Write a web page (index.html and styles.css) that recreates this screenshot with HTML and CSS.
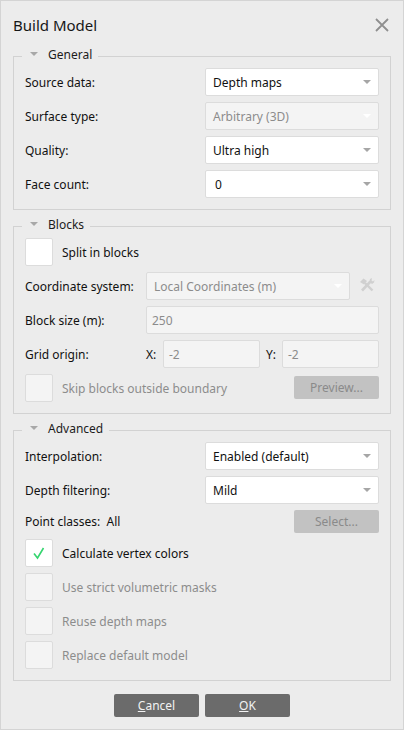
FILE: index.html
```html
<!DOCTYPE html>
<html lang="en">
<head>
<meta charset="utf-8">
<title>Build Model</title>
<link rel="stylesheet" href="styles.css">
</head>
<body>
<div class="dialog">
  <header class="titlebar">
    <h1 class="title">Build Model</h1>
    <svg class="close" width="14" height="14" viewBox="0 0 14 14"><path d="M1 1L13 13M13 1L1 13" stroke="#8f8f8f" stroke-width="1.8" fill="none"/></svg>
  </header>

  <section class="group">
    <div class="legend"><span class="tri"></span><span>General</span></div>
    <div class="row"><span class="label">Source data:</span><div class="combo wide"><span>Depth maps</span><i class="arrow"></i></div></div>
    <div class="row"><span class="label">Surface type:</span><div class="combo wide off"><span>Arbitrary (3D)</span><i class="arrow"></i></div></div>
    <div class="row"><span class="label">Quality:</span><div class="combo wide"><span>Ultra high</span><i class="arrow"></i></div></div>
    <div class="row"><span class="label">Face count:</span><div class="combo wide count"><span>0</span><i class="arrow"></i></div></div>
  </section>

  <section class="group">
    <div class="legend"><span class="tri"></span><span>Blocks</span></div>
    <div class="row"><span class="box"></span><span class="check-label">Split in blocks</span></div>
    <div class="row"><span class="label fixed">Coordinate system:</span>
      <div class="combo crs off"><span>Local Coordinates (m)</span><i class="arrow"></i></div>
      <svg class="tools" width="16" height="16" viewBox="0 0 16 16"><path d="M3 13.5L11.5 4.5" stroke="#d0d0d0" stroke-width="2.6" fill="none"/><path d="M10.5 5L11 2L13 1L12.5 3.5L14 4.5L15.5 3L15 5.5L13 7Z" fill="#d0d0d0"/><path d="M6 6L13.5 13.5" stroke="#d0d0d0" stroke-width="2.4" fill="none"/><path d="M1 5L4.5 1.5L8 4L5 7.5Z" fill="#d0d0d0"/></svg>
    </div>
    <div class="row"><span class="label fixed">Block size (m):</span><div class="input grow">250</div></div>
    <div class="row"><span class="label fixed">Grid origin:</span><span class="axis">X:</span><div class="input grow">-2</div><span class="axis axis-y">Y:</span><div class="input grow">-2</div></div>
    <div class="row"><span class="box off"></span><span class="check-label muted">Skip blocks outside boundary</span><button class="btn-off preview">Preview...</button></div>
  </section>

  <section class="group">
    <div class="legend"><span class="tri"></span><span>Advanced</span></div>
    <div class="row"><span class="label">Interpolation:</span><div class="combo wide"><span>Enabled (default)</span><i class="arrow"></i></div></div>
    <div class="row"><span class="label">Depth filtering:</span><div class="combo wide"><span>Mild</span><i class="arrow"></i></div></div>
    <div class="row short"><span class="label">Point classes:&nbsp; All</span><button class="btn-off">Select...</button></div>
    <div class="row"><span class="box"><svg width="14" height="14" viewBox="0 0 14 14"><path d="M2 7.5L5.5 12L11.5 2" stroke="#35d56f" stroke-width="1.6" fill="none"/></svg></span><span class="check-label">Calculate vertex colors</span></div>
    <div class="row"><span class="box off"></span><span class="check-label muted">Use strict volumetric masks</span></div>
    <div class="row"><span class="box off"></span><span class="check-label muted">Reuse depth maps</span></div>
    <div class="row"><span class="box off"></span><span class="check-label muted">Replace default model</span></div>
  </section>

  <footer class="actions">
    <button class="btn"><u>C</u>ancel</button>
    <button class="btn"><u>O</u>K</button>
  </footer>
</div>
</body>
</html>
```
FILE: styles.css
```css
* { box-sizing: border-box; }
html, body { margin: 0; padding: 0; }
body {
  width: 404px;
  height: 730px;
  overflow: hidden;
  background: #ececec;
  font-family: "Noto Sans", sans-serif;
  font-size: 12px;
  color: #111;
}
.dialog {
  width: 404px;
  height: 730px;
  border: 1px solid #d4d4d4;
  padding: 0 12px;
  display: flex;
  flex-direction: column;
}
.titlebar {
  height: 55px;
  display: flex;
  justify-content: space-between;
  align-items: flex-start;
  flex: none;
}
.title {
  margin: 14px 0 0 0;
  font-size: 15px;
  font-weight: 400;
  line-height: 20px;
  color: #161616;
}
.close { margin: 17px 2px 0 0; }
.group {
  border: 1px solid #d2d2d2;
  padding: 11px;
  margin-bottom: 16px;
  display: flex;
  flex-direction: column;
  gap: 6px;
  flex: none;
}
.legend {
  display: flex;
  align-items: center;
  height: 16px;
  margin: -22px 0 0 -3px;
  align-self: flex-start;
  background: #ececec;
  padding: 0 6px 0 8px;
  gap: 10px;
  color: #1c1c1c;
}
.tri {
  width: 0;
  height: 0;
  border-left: 4px solid transparent;
  border-right: 4px solid transparent;
  border-top: 4px solid #a8a8a8;
}
.row {
  height: 28px;
  display: flex;
  align-items: center;
  flex: none;
}
.row.short { height: 23px; }
.label { flex: 1; }
.label.fixed { flex: none; width: 121px; }
.combo {
  height: 28px;
  background: #fff;
  border: 1px solid #dcdcdc;
  border-radius: 2px;
  display: flex;
  align-items: center;
  justify-content: space-between;
  padding: 0 6px 0 7px;
  color: #111;
}
.combo.wide { width: 174px; }
.combo.count { padding-left: 9px; }
.combo.crs { width: 204px; }
.combo.off, .input {
  background: #f4f4f4;
  color: #8c8c8c;
}
.arrow {
  width: 0;
  height: 0;
  border-left: 4px solid transparent;
  border-right: 4px solid transparent;
  border-top: 4px solid #a6a6a6;
  margin-right: 1px;
}
.combo.off .arrow { border-top-color: #fff; }
.tools { margin-left: 9px; margin-top: -2px; }
.input {
  height: 28px;
  border: 1px solid #dcdcdc;
  border-radius: 2px;
  display: flex;
  align-items: center;
  padding: 0 5px;
}
.grow { flex: 1; }
.axis { width: 17px; }
.axis-y { width: 22px; padding-left: 6px; }
.box {
  width: 28px;
  height: 28px;
  background: #fff;
  border: 1px solid #dcdcdc;
  border-radius: 2px;
  display: flex;
  align-items: center;
  justify-content: center;
  flex: none;
}
.box.off { background: #f4f4f4; }
.check-label { margin-left: 9px; flex: 1; }
.muted { color: #8c8c8c; }
.btn-off {
  width: 85px;
  height: 23px;
  flex: none;
  border: none;
  border-radius: 2px;
  background: #c2c2c2;
  color: #8a8a8a;
  font: inherit;
  padding: 0;
}
.btn-off.preview { margin-bottom: 1px; }
.actions {
  display: flex;
  justify-content: center;
  gap: 6px;
  margin-top: -3px;
}
.btn {
  width: 85px;
  height: 23px;
  border: none;
  border-radius: 2px;
  background: #6b6b6b;
  color: #f2f2f2;
  font: inherit;
  padding: 0;
}
```
